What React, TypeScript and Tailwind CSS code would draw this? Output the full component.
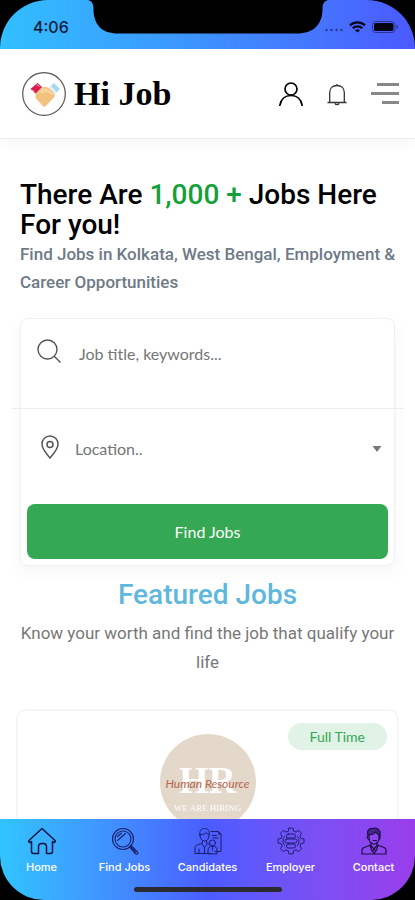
import { useState } from "react";
import type { ReactNode } from "react";

interface Tab {
  label: string;
  icon: ReactNode;
}

const line = {
  fill: "none",
  stroke: "currentColor",
  strokeLinecap: "round" as const,
  strokeLinejoin: "round" as const,
};

function HomeIcon() {
  return (
    <svg viewBox="0 0 28 28" className="size-7" strokeWidth="1.5" {...line}>
      <path d="M14 1.5 27 13.5c.8 1.2-.4 2.4-1.8 1.6l-.7-.5v10c0 1.2-.6 1.900-1.800 1.900h-4.200V20c0-2.400-1.400-3.500-3.300-3.500h-1.400c-2 0-3.300 1.100-3.300 3.500v6.500H5.300c-1.200 0-1.800-.7-1.800-1.900v-10l-.7.5C1.400 15.900.2 14.700 1 13.500Z" />
    </svg>
  );
}

function FindIcon() {
  return (
    <svg viewBox="0 0 28 28" className="size-7" strokeWidth="1.1" {...line}>
      <circle cx="12" cy="12" r="10.5" />
      <circle cx="12" cy="12" r="8" />
      <path d="m18.5 20 1.500-1.500 6.500 6.300c1.200 1.500-.6 3.200-2 2l-6-6.800Zm1.700.3 4.800 5M6.500 9.500l4-3.500M6.500 13.500l8-7" />
    </svg>
  );
}

function CandidatesIcon() {
  return (
    <svg viewBox="0 0 28 28" className="size-7" strokeWidth="1" {...line}>
      <path d="M6 8.500C5 4 7 1.500 10.500 1.500S16 4 15 8.500c0 3.500-2 5.500-4.500 5.500S6 12 6 8.500Zm0-1c3.500.5 5-.8 6-2 .8 1.300 1.700 1.800 3 2" />
      <path d="M8.500 14v2L3 18c-1.300.6-2 1.700-2 3v5.500h15M12.500 14v2l3 1.300M7.500 16.500l3 4 3-4M10.500 20.500v6M5 22v4.500" />
      <path d="M17 4.500h7.500l2.500 2.500v17.500h-6M24.500 4.500V7H27M18.500 8.500h4M19 11h5" />
      <circle cx="18.5" cy="16" r="3" />
      <path d="M14 26.500v-3.500c0-2.500 2-4 4.500-4s4.500 1.500 4.500 4v3.500Zm4.500-7.500v4" />
    </svg>
  );
}

function EmployerIcon() {
  return (
    <svg viewBox="0 0 28 28" className="size-7" strokeWidth="1" {...line}>
      <path d="M12 1h4l.6 3.100 2.400 1 2.700-1.700 2.900 2.900L22.900 9l1 2.400L27 12v4l-3.100.6-1 2.400 1.700 2.700-2.900 2.900-2.700-1.700-2.400 1L16 27h-4l-.6-3.100-2.400-1-2.700 1.700-2.900-2.900L5.100 19l-1-2.400L1 16v-4l3.100-.6 1-2.400-1.700-2.700 2.900-2.900L9 5.100l2.400-1Z" />
      <rect x="9.5" y="7" width="9" height="4" rx="1.8" />
      <rect x="8" y="12" width="12" height="4" rx="1.8" />
      <rect x="9.5" y="17" width="9" height="4" rx="1.8" />
      <path d="M7.500 9.500c-1 1.300-1.500 2.800-1.500 4.500s.5 3.200 1.500 4.500M20.500 9.500c1 1.300 1.500 2.800 1.500 4.500s-.5 3.200-1.500 4.500" />
    </svg>
  );
}

function ContactIcon() {
  return (
    <svg viewBox="0 0 28 28" className="size-7" strokeWidth="1.2" {...line}>
      <path d="M8 8c-1.500-4 1-7 4.500-6.500C16.500.2 21 2.500 20 8c-1.500-.5-3.500-1.200-4.500-3C14.500 6.500 12.500 8 8 8Z" fill="currentColor" fillOpacity=".6" />
      <path d="M9 8v3c0 3.500 2.200 6 5 6s5-2.500 5-6V8M20 8v3c0 .8-.4 1.500-1.200 1.500" />
      <path d="M8 8.500c-1.300.5-1.300 3.500 1 3.800M13 13.500h3.500" />
      <path d="M2 27v-3.500c0-1.600 1-2.700 2.500-3.200L10.500 18l3.500 4 3.500-4 6 2.300c1.500.5 2.500 1.600 2.500 3.200V27ZM11 15.500V18M17 15.500V18M14 22l-1.500 2L14 27l1.500-3ZM10 18.500l2 5.500M18 18.500l-2 5.500" />
    </svg>
  );
}

const tabs: Tab[] = [
  { label: "Home", icon: <HomeIcon /> },
  { label: "Find Jobs", icon: <FindIcon /> },
  { label: "Candidates", icon: <CandidatesIcon /> },
  { label: "Employer", icon: <EmployerIcon /> },
  { label: "Contact", icon: <ContactIcon /> },
];

function StatusBar() {
  return (
    <div className="relative h-[49px] shrink-0 bg-black">
      <div className="flex h-full items-center justify-between rounded-t-[48px] bg-linear-to-r from-[#31bfff] via-[#3d90ff] to-[#4b58ff] pr-4 pl-[33px] text-[#0b1a3a]">
        <span className="pt-1 font-['Inter',sans-serif] text-base font-medium">4:06</span>
        <div className="flex items-center gap-1.5 pt-1">
          <svg viewBox="0 0 18 12" className="h-3 w-[18px]" fill="#26378f">
            <circle cx="1.5" cy="9" r="1.2" />
            <circle cx="6.5" cy="9" r="1.2" />
            <circle cx="11.5" cy="9" r="1.2" />
            <circle cx="16.5" cy="9" r="1.2" />
          </svg>
          <svg viewBox="0 0 17 12" className="h-3 w-[17px]" fill="none" stroke="#05081c" strokeWidth="2.2">
            <path d="M1 4.400c4.200-4 10.800-4 15 0M3.700 7.300c2.700-2.500 6.900-2.500 9.600 0" />
            <path d="M8.500 11.500 6 9.200c1.400-1.200 3.600-1.200 5 0Z" fill="#05081c" stroke="none" />
          </svg>
          <svg viewBox="0 0 27 12" className="h-3 w-[27px]">
            <rect x=".5" y=".5" width="22.5" height="11" rx="3" fill="none" stroke="#29349a" />
            <rect x="2" y="2" width="19.5" height="8" rx="1.500" fill="#05050f" />
            <path d="M24.500 3.500c2 1 2 4 0 5Z" fill="#29349a" />
          </svg>
        </div>
      </div>
      {/* notch */}
      <svg viewBox="0 0 240 34" className="absolute top-0 left-1/2 h-[34px] w-60 -translate-x-1/2">
        <path d="M0 0c4 1 5.500 4 5.500 9C5.500 25 14 33.500 30 33.500h179c16 0 25.500-8.500 25.500-24.500 0-5 1.500-8 5.500-9Z" />
      </svg>
    </div>
  );
}

function Logo() {
  return (
    <a href="#" className="flex items-center gap-2">
      <svg viewBox="0 0 44 44" className="size-11">
        <circle cx="22" cy="22" r="21.3" fill="#fff" stroke="#555" strokeWidth="1.2" />
        <path d="M14 18.500 20 15l6 .2 6 4.800.8 4.500-9 9.500c-1 1-2 1-3 0L13.500 26Z" fill="#f4c27f" />
        <path d="m19 16 7 1 6 4.500-2 1.500-6-3-5 1.500-2-1.500Z" fill="#f8d39b" />
        <path d="m8.500 17 7-6 4.500 4-6.500 6.500Z" fill="#d81b4a" />
        <path d="m10.500 18 1.500 1.500M15 12.500l2 2" stroke="#fff" strokeWidth="1" />
        <path d="m28 15 4-4 6 6-4.500 4.500Z" fill="#a9d9ee" />
        <path d="m27 15.500 2-1.500 5.500 6-1.500 2Z" fill="#dff1f9" />
      </svg>
      <span className="font-['Liberation_Serif',serif] text-[34px] leading-none font-bold">Hi Job</span>
    </a>
  );
}

function Header() {
  return (
    <header className="flex h-[90px] shrink-0 items-center justify-between border-b border-[#ececec] bg-white pr-4 pl-[22px] text-black shadow-[0_4px_14px_rgba(0,0,0,0.04)]">
      <Logo />
      <div className="flex items-center">
        <button aria-label="Account" className="mr-6">
          <svg viewBox="0 0 24 24" className="size-6" strokeWidth="1.7" {...line}>
            <circle cx="12" cy="7" r="6" />
            <path d="M.8 23.500C2 17 6 13.500 12 13.500S22 17 23.200 23.500" />
          </svg>
        </button>
        <button aria-label="Notifications" className="mr-6">
          <svg viewBox="0 0 20 24" className="h-6 w-5" strokeWidth="1.3" stroke="#333" fill="none">
            <path d="M.5 20.500h19M2.700 20.500V10.500C2.700 6.500 5.500 3.500 10 3.500s7.300 3 7.300 7v10M10 2v1.500M8 21.500c.5 1.500 3.500 1.500 4 0" />
          </svg>
        </button>
        <button aria-label="Menu" className="flex w-7 flex-col items-end gap-1.5">
          <span className="h-[3px] w-[22px] bg-[#888]" />
          <span className="h-[3px] w-7 bg-[#888]" />
          <span className="h-[3px] w-[17px] bg-[#888]" />
        </button>
      </div>
    </header>
  );
}

function SearchForm() {
  const [keywords, setKeywords] = useState("");

  return (
    <form
      onSubmit={(e) => e.preventDefault()}
      className="mx-5 mt-[22px] rounded-lg border border-[#f0f0f0] font-['Lato',sans-serif] text-base text-[#757575] shadow-[0_6px_15px_rgba(64,79,104,0.05)]"
    >
      <label className="flex h-[89px] items-start gap-[18px] px-4 pt-5">
        <svg viewBox="0 0 24 24" className="size-6 shrink-0" strokeWidth="1.4" stroke="#555" fill="none">
          <circle cx="10.5" cy="10.5" r="9.5" />
          <path d="m17.500 17.500 6 6" />
        </svg>
        <input
          type="text"
          value={keywords}
          onChange={(e) => setKeywords(e.target.value)}
          placeholder="Job title, keywords..."
          aria-label="Job title or keywords"
          className="h-7 w-full min-w-0 outline-none placeholder:text-[#757575]"
        />
      </label>
      <hr className="-mx-2.5 border-[#ececec]" />
      <label className="flex h-[95px] items-start gap-4 px-5 pt-[26px]">
        <svg viewBox="0 0 18 24" className="h-6 w-[18px] shrink-0" strokeWidth="1.5" stroke="#555" fill="none">
          <path d="M9 23C5 18.500 1 14 1 9a8 8 0 0 1 16 0c0 5-4 9.500-8 14Z" />
          <circle cx="9" cy="9.5" r="3" />
        </svg>
        <span className="flex min-w-0 flex-1 items-center">
          <select aria-label="Location" className="h-7 min-w-0 flex-1 appearance-none bg-transparent outline-none">
            <option>Location..</option>
          </select>
          <svg viewBox="0 0 10 6" className="-mr-2 h-1.5 w-2.5 shrink-0" fill="#777">
            <path d="M.5 0h9L5 6Z" />
          </svg>
        </span>
      </label>
      <div className="px-1.5 pb-1.5">
        <button className="h-[55px] w-full rounded-lg bg-[#34a853] text-white">Find Jobs</button>
      </div>
    </form>
  );
}

function JobCard() {
  return (
    <article className="mx-4 mt-8 h-[300px] rounded-[10px] border-2 border-[#f5f5f5] px-2.5 pt-3">
      <div className="flex justify-end">
        <span className="rounded-full bg-[#e1f2e6] px-[22px] py-1 font-['Lato',sans-serif] text-sm leading-[19px] text-[#34a853]">
          Full Time
        </span>
      </div>
      <div className="relative mx-auto -mt-4 size-24 overflow-hidden rounded-full bg-[#e3d8c9] text-center">
        <p className="pt-7 font-['Liberation_Serif',serif] text-[38px] leading-9 font-bold text-white">HR</p>
        <p className="pt-1 font-['Liberation_Serif',serif] text-[9px] leading-3 text-white">WE ARE HIRING</p>
        <p className="absolute inset-x-0 top-10 font-['Lato',sans-serif] text-xs leading-5 whitespace-nowrap text-[#b5684f] italic">
          Human Resource
        </p>
      </div>
    </article>
  );
}

function TabBar() {
  return (
    <div className="shrink-0 bg-black">
      <nav className="rounded-b-[44px] bg-linear-to-r from-[#31c4ff] via-[#4a5cff] to-[#9a3deb] pt-2 pb-2">
        <ul className="grid grid-cols-5">
          {tabs.map((tab) => (
            <li key={tab.label} className="text-[#1a1f6b] first:text-[#0a1440] last:text-[#1c0f45]">
              <a href="#" className="flex flex-col items-center gap-1">
                {tab.icon}
                <span className="font-['Inter',sans-serif] text-[11px] leading-4 font-medium whitespace-nowrap text-white">
                  {tab.label}
                </span>
              </a>
            </li>
          ))}
        </ul>
        <div className="mx-auto mt-3 h-[5px] w-[148px] rounded-full bg-[#2a2a30]" />
      </nav>
    </div>
  );
}

export default function App() {
  return (
    <div className="flex h-screen flex-col bg-white font-['Roboto',sans-serif]">
      <StatusBar />
      <Header />
      <main className="min-h-0 flex-1 overflow-y-auto pt-[41px] [scrollbar-width:none]">
        <section>
          <div className="pr-3 pl-5">
            <h1 className="text-[28px] leading-[30px] font-medium text-black">
              There Are <span className="text-[#16a03a]">1,000 +</span> Jobs Here For you!
            </h1>
            <p className="text-[17px] leading-7 font-medium text-[#6f7a87]">
              Find Jobs in Kolkata, West Bengal, Employment &amp; Career Opportunities
            </p>
          </div>
          <SearchForm />
        </section>
        <section className="pt-[11px]">
          <h2 className="text-center text-[28px] leading-9 font-medium text-[#5fb8dc]">Featured Jobs</h2>
          <p className="mt-1.5 px-4 text-center text-[17px] leading-[29px] text-[#777]">
            Know your worth and find the job that qualify your life
          </p>
          <JobCard />
        </section>
      </main>
      <TabBar />
    </div>
  );
}
